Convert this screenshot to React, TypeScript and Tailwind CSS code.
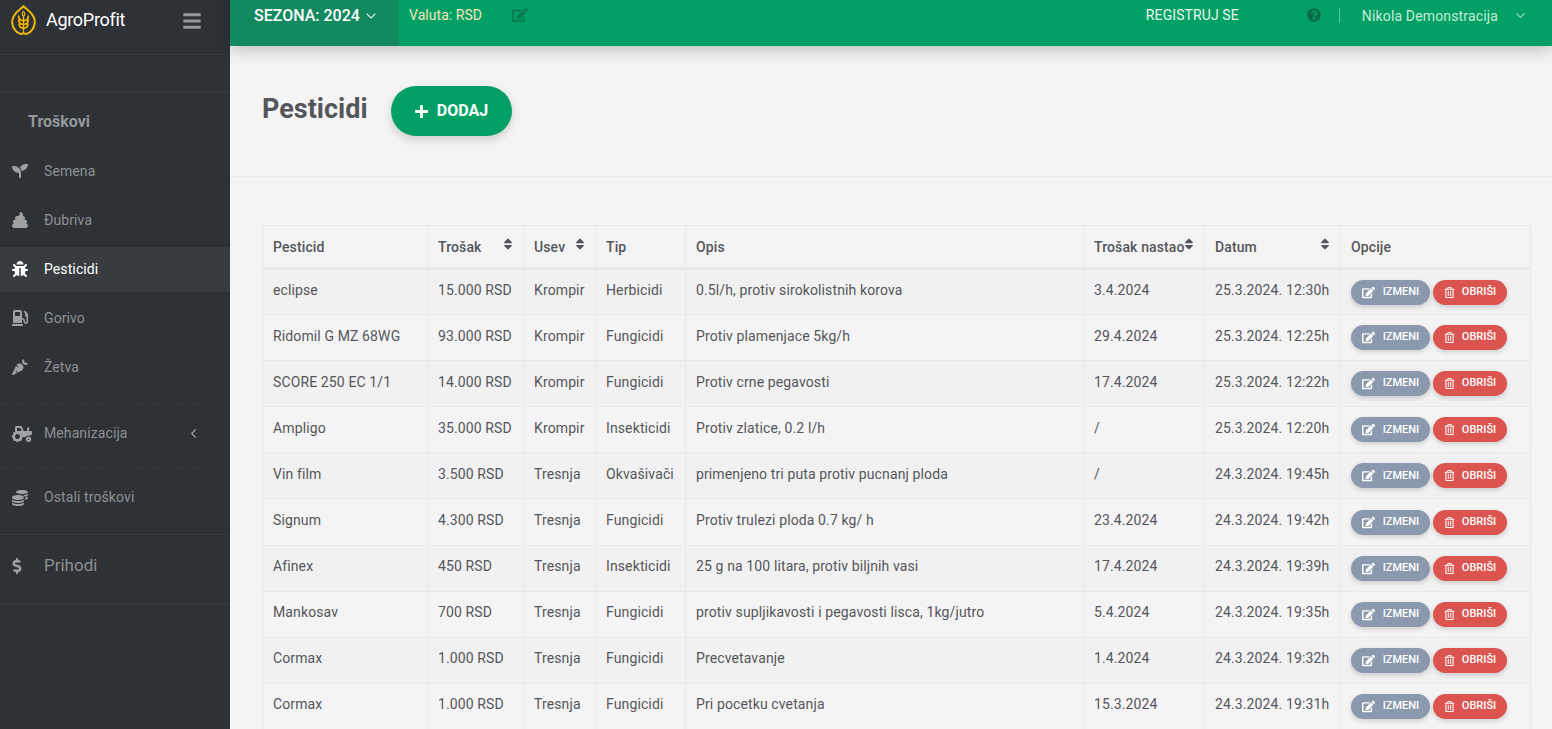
import React from "react";
import { ChevronDown, ChevronLeft } from "lucide-react";
import {
  FaBars,
  FaBug,
  FaCarrot,
  FaCoins,
  FaDollarSign,
  FaEdit,
  FaGasPump,
  FaPlus,
  FaPoop,
  FaQuestionCircle,
  FaRegTrashAlt,
  FaSeedling,
  FaSort,
  FaTractor,
} from "react-icons/fa";

const rows = [
  ["eclipse", "15.000 RSD", "Krompir", "Herbicidi", "0.5l/h, protiv sirokolistnih korova", "3.4.2024", "25.3.2024. 12:30h"],
  ["Ridomil G MZ 68WG", "93.000 RSD", "Krompir", "Fungicidi", "Protiv plamenjace 5kg/h", "29.4.2024", "25.3.2024. 12:25h"],
  ["SCORE 250 EC 1/1", "14.000 RSD", "Krompir", "Fungicidi", "Protiv crne pegavosti", "17.4.2024", "25.3.2024. 12:22h"],
  ["Ampligo", "35.000 RSD", "Krompir", "Insekticidi", "Protiv zlatice, 0.2 l/h", "/", "25.3.2024. 12:20h"],
  ["Vin film", "3.500 RSD", "Tresnja", "Okvašivači", "primenjeno tri puta protiv pucnanj ploda", "/", "24.3.2024. 19:45h"],
  ["Signum", "4.300 RSD", "Tresnja", "Fungicidi", "Protiv trulezi ploda 0.7 kg/ h", "23.4.2024", "24.3.2024. 19:42h"],
  ["Afinex", "450 RSD", "Tresnja", "Insekticidi", "25 g na 100 litara, protiv biljnih vasi", "17.4.2024", "24.3.2024. 19:39h"],
  ["Mankosav", "700 RSD", "Tresnja", "Fungicidi", "protiv supljikavosti i pegavosti lisca, 1kg/jutro", "5.4.2024", "24.3.2024. 19:35h"],
  ["Cormax", "1.000 RSD", "Tresnja", "Fungicidi", "Precvetavanje", "1.4.2024", "24.3.2024. 19:32h"],
  ["Cormax", "1.000 RSD", "Tresnja", "Fungicidi", "Pri pocetku cvetanja", "15.3.2024", "24.3.2024. 19:31h"],
];

// Wheat-in-a-leaf logo
const Logo = () => (
  <svg viewBox="0 0 26 31" className="w-[25px] h-[30px] shrink-0" fill="none" stroke="#f2b705" strokeLinecap="round">
    <path d="M13 1.200C9.500 5 1.200 9 1.200 17.500c0 7 5.800 12.500 9.300 12.500 1.200 0 2-.5 2.500-1.300.5.8 1.300 1.300 2.500 1.300 3.500 0 9.300-5.500 9.300-12.500C24.800 9 16.500 5 13 1.200z" strokeWidth="2" />
    <path d="M13 12v15" strokeWidth="1.400" />
    <path d="M13 6.500c-1.800 1.700-1.800 3.500 0 5.500 1.800-2 1.800-3.800 0-5.500z" strokeWidth="1.200" />
    <path d="M8 11.500c0 2.800 2 4.200 4.500 4.600M18 11.500c0 2.800-2 4.200-4.500 4.600M8 15.500c0 2.800 2 4.200 4.500 4.600M18 15.500c0 2.800-2 4.200-4.500 4.600M8.500 19.800c0 2.500 1.800 3.800 4 4.200M17.500 19.800c0 2.500-1.800 3.800-4 4.200" strokeWidth="1.800" />
  </svg>
);

const NavItem = ({ icon, label, active }: { icon: React.ReactNode; label: string; active?: boolean }) => (
  <div
    className={`h-[45px] mb-[4px] flex items-center pl-3 pb-[1px] text-[14px] tracking-[0.1px] ${
      active ? "bg-[#383b40] text-white" : "text-[#8e9093]"
    }`}
  >
    <span className={`w-[32px] text-[16px] ${active ? "text-white" : "text-[#a0a1a3]"}`}>{icon}</span>
    {label}
  </div>
);

const Sidebar = () => (
  <aside className="w-[230px] shrink-0 h-full bg-[#2e3136] flex flex-col">
    <div className="h-[55px] shrink-0 border-b border-[#383b40] flex items-center pl-[11px] pb-[15px]">
      <Logo />
      <span className="ml-[10px] text-[18px] text-white tracking-[-0.3px]">AgroProfit</span>
      <FaBars className="ml-[57px] mt-[2px] text-[#96989b] text-[20px]" />
    </div>
    <div className="h-[38px] shrink-0 border-b border-[#383b40]" />
    <div className="h-[56px] shrink-0 flex items-center pl-[28px] pt-[1px] text-[16px] font-bold text-[#96989b]">Troškovi</div>
    <div>
      <NavItem icon={<FaSeedling />} label="Semena" />
      <NavItem icon={<FaPoop />} label="Đubriva" />
      <NavItem icon={<FaBug />} label="Pesticidi" active />
      <NavItem icon={<FaGasPump />} label="Gorivo" />
      <NavItem icon={<FaCarrot />} label="Žetva" />
    </div>
    <div className="h-[65px] shrink-0 mt-[10px] border-y border-dashed border-[#383b40] flex items-center pl-3 pb-[6px] text-[14px] tracking-[0.1px] text-[#8e9093]">
      <span className="w-[32px] text-[20px] text-[#a0a1a3]">
        <FaTractor />
      </span>
      Mehanizacija
      <ChevronLeft size={15} strokeWidth={1.75} className="ml-[58px] text-[#a0a1a3]" />
    </div>
    <div className="h-[66px] shrink-0 border-b border-[#383b40] flex items-center pl-3 pb-[8px] text-[14px] tracking-[0.1px] text-[#8e9093]">
      <span className="w-[32px] text-[16px] text-[#a0a1a3]">
        <FaCoins />
      </span>
      Ostali troškovi
    </div>
    <div className="h-[70px] shrink-0 border-b border-[#383b40] flex items-center pl-3 pb-[8px] text-[17px] text-[#8e9093]">
      <span className="w-[32px] text-[16px] text-[#a0a1a3]">
        <FaDollarSign className="-ml-[3px]" />
      </span>
      Prihodi
    </div>
  </aside>
);

const Topbar = () => (
  <header className="h-[46px] shrink-0 bg-[#03a066] flex relative z-10 shadow-[0_4px_16px_rgba(0,0,0,0.22)]">
    <div className="w-[169px] bg-[#12895f] flex items-start pt-[4px] pl-[24px] text-white text-[16px] font-medium">
      SEZONA: 2024
      <ChevronDown size={16} strokeWidth={1.75} className="ml-[3px] mt-[4px] text-[#cfe9dd]" />
    </div>
    <span className="ml-[10px] pt-[5px] text-[14px] tracking-[0.05px] text-[#f3e6b8]">Valuta: RSD</span>
    <FaEdit className="ml-[30px] mt-[7px] text-[16px] text-[#0b7a50]" />
    <span className="ml-auto pt-[5px] text-[14px] tracking-[0.1px] text-[#e6f7ef]">REGISTRUJ SE</span>
    <FaQuestionCircle className="ml-[68px] mt-[8px] text-[14px] text-[#0b6b48]" />
    <span className="ml-[18px] mt-[8px] h-[15px] border-l border-[#5dc49c]" />
    <span className="ml-[22px] pt-[6px] text-[14px] tracking-[0.15px] text-[#c4ebd9]">Nikola Demonstracija</span>
    <ChevronDown size={15} strokeWidth={1.75} className="ml-[15px] mr-[24px] mt-[8px] text-[#9bdcc0]" />
  </header>
);

const cellBorder = "border border-[#e9e9e9] px-[10px]";

const SortHead = ({ label, className }: { label: string; className?: string }) => (
  <th className={`${cellBorder} pt-[2px] text-left font-medium relative ${className ?? ""}`}>
    {label}
    <FaSort className="absolute right-[8px] top-[11px] text-[14px] text-[#54565b]" />
  </th>
);

const ActionButtons = () => (
  <div className="flex gap-[3px]">
    <button className="w-[79px] h-[25px] rounded-full bg-[#8a99ad] text-white text-[11px] font-medium tracking-normal flex items-center justify-center gap-[8px] shadow-[0_2px_5px_rgba(0,0,0,0.16)]">
      <FaEdit className="text-[13px]" />
      IZMENI
    </button>
    <button className="w-[74px] h-[25px] rounded-full bg-[#dc5450] text-white text-[11px] font-medium tracking-normal flex items-center justify-center gap-[7px] shadow-[0_2px_5px_rgba(0,0,0,0.16)]">
      <FaRegTrashAlt className="text-[11px]" />
      OBRIŠI
    </button>
  </div>
);

const PesticideTable = () => (
  <table className="w-[1268px] table-fixed border-collapse text-[14px] tracking-[0.12px] text-[#54565b]">
    <colgroup>
      <col className="w-[165px]" />
      <col className="w-[96px]" />
      <col className="w-[72px]" />
      <col className="w-[90px]" />
      <col className="w-[398px]" />
      <col className="w-[121px]" />
      <col className="w-[136px]" />
      <col className="w-[190px]" />
    </colgroup>
    <thead>
      <tr className="h-[43px] border-b-[3px] border-[#e9e9e9]">
        <th className={`${cellBorder} pt-[2px] text-left font-medium`}>Pesticid</th>
        <SortHead label="Trošak" />
        <SortHead label="Usev" />
        <th className={`${cellBorder} pt-[2px] text-left font-medium`}>Tip</th>
        <th className={`${cellBorder} pt-[2px] text-left font-medium`}>Opis</th>
        <SortHead label="Trošak nastao" className="whitespace-nowrap" />
        <SortHead label="Datum" />
        <th className={`${cellBorder} pt-[2px] text-left font-medium`}>Opcije</th>
      </tr>
    </thead>
    <tbody>
      {rows.map((row, i) => (
        <tr key={i} className={`h-[46.1px] ${i % 2 === 0 ? "bg-[#f1f1f1]" : ""}`}>
          {row.map((cell, j) => (
            <td key={j} className={`${cellBorder} pb-[3px] whitespace-nowrap`}>
              {cell}
            </td>
          ))}
          <td className={cellBorder}>
            <ActionButtons />
          </td>
        </tr>
      ))}
    </tbody>
  </table>
);

export default function App() {
  return (
    <div className="w-[1552px] h-[729px] overflow-hidden flex bg-[#f4f4f4] font-['Roboto',sans-serif]">
      <Sidebar />
      <main className="flex-1 flex flex-col min-w-0">
        <Topbar />
        <div className="h-[131px] shrink-0 border-b border-[#ebebeb] pl-[32px] pt-[40px] flex items-start">
          <h1 className="text-[27px] font-bold text-[#54565b] leading-[46px]">Pesticidi</h1>
          <button className="ml-[23px] w-[121px] h-[50px] rounded-full bg-[#03a066] text-white text-[16px] font-bold flex items-center justify-center gap-[8px] shadow-[0_4px_10px_rgba(0,0,0,0.16)]">
            <FaPlus className="text-[15px]" />
            DODAJ
          </button>
        </div>
        <div className="pl-[32px] pt-[48px]">
          <PesticideTable />
        </div>
      </main>
    </div>
  );
}
